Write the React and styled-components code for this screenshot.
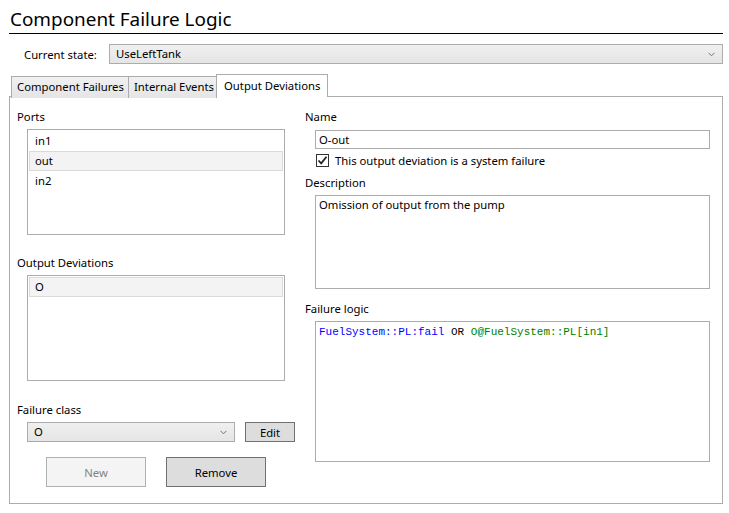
import React from "react";
import styled, { createGlobalStyle } from "styled-components";

const Global = createGlobalStyle`
  html, body { margin: 0; padding: 0; background: #fff; }
  body { font-family: "Segoe UI", "Noto Sans", "Liberation Sans", sans-serif; font-size: 11.3px; color: #000; }
  * { box-sizing: border-box; }
`;

const Page = styled.div`
  width: 729px;
  height: 513px;
  padding: 0 6px 0 9px;
  display: flex;
  flex-direction: column;
`;

const Title = styled.h1`
  margin: 0;
  height: 34px;
  padding: 7px 0 0 1px;
  font-size: 18.9px;
  font-weight: 400;
  line-height: 24px;
  border-bottom: 1px solid #000;
`;

const StateRow = styled.div`
  margin-top: 10px;
  display: flex;
  align-items: center;
  padding-left: 15px;
  height: 20px;
`;

const StateLabel = styled.span`
  width: 85px;
`;

const Combo = styled.div`
  flex: ${(p) => (p.$grow ? 1 : "none")};
  width: ${(p) => (p.$width ? `${p.$width}px` : "auto")};
  height: 20px;
  border: 1px solid #acacac;
  background: linear-gradient(#f0f0f0, #e5e5e5);
  display: flex;
  align-items: center;
  justify-content: space-between;
  padding: 0 7px 0 6px;
  line-height: 18px;
`;

const Chevron = () => (
  <svg width="7" height="5" viewBox="0 0 7 5">
    <path d="M0.5 0.8 L3.5 3.8 L6.5 0.8" fill="none" stroke="#707070" strokeWidth="1" />
  </svg>
);

const TabStrip = styled.div`
  margin-top: 10px;
  padding-left: 2px;
  display: flex;
  align-items: flex-start;
  height: 22px;
  position: relative;
  z-index: 1;
`;

const Tab = styled.div`
  width: ${(p) => p.$width}px;
  height: ${(p) => (p.$active ? 23 : 22)}px;
  margin-top: ${(p) => (p.$active ? 0 : 2)}px;
  border: 1px solid #acacac;
  border-bottom: none;
  margin-left: ${(p) => (p.$first ? 0 : -1)}px;
  background: ${(p) => (p.$active ? "#fff" : "linear-gradient(#f0f0f0, #e5e5e5)")};
  display: flex;
  align-items: flex-start;
  padding: ${(p) => (p.$active ? "2px 0 0 7px" : "1px 0 0 5px")};
  white-space: nowrap;
  line-height: 17px;
`;

const Panel = styled.div`
  height: 408px;
  border: 1px solid #acacac;
  padding: 10px 12px 0 7px;
  display: grid;
  grid-template-columns: 278px 1fr;
  column-gap: 10px;
`;

const Column = styled.div`
  display: flex;
  flex-direction: column;
`;

const Label = styled.div`
  height: 20px;
  line-height: 20px;
  margin-top: ${(p) => p.$top || 0}px;
`;

const ListBox = styled.div`
  margin: 2px 0 0 10px;
  width: 258px;
  height: 106px;
  border: 1px solid #acacac;
  padding: 1px;
  background: #fff;
`;

const ListItem = styled.div`
  height: 20px;
  line-height: 18px;
  padding-left: 5px;
  border: 1px solid ${(p) => (p.$selected ? "#dadada" : "transparent")};
  background: ${(p) => (p.$selected ? "#f3f3f3" : "transparent")};
`;

const ClassRow = styled.div`
  margin: 2px 0 0 10px;
  display: flex;
  gap: 10px;
`;

const Button = styled.button`
  width: ${(p) => p.$width}px;
  height: ${(p) => p.$height}px;
  font: inherit;
  color: ${(p) => (p.disabled ? "#838383" : "#000")};
  background: ${(p) => (p.disabled ? "#f4f4f4" : "#dddddd")};
  border: 1px solid ${(p) => (p.disabled ? "#adb2b5" : "#707070")};
  padding: 0;
  margin: 0;
`;

const ButtonRow = styled.div`
  margin: 15px 0 0 29px;
  display: flex;
  gap: 20px;
`;

const TextBox = styled.div`
  margin: ${(p) => p.$mt}px 0 0 10px;
  height: ${(p) => p.$height}px;
  border: 1px solid #acacac;
  padding: ${(p) => (p.$code ? "3px 3px" : "0 3px")};
  line-height: ${(p) => (p.$code ? "14px" : "17px")};
  background: #fff;
  font-family: ${(p) => (p.$code ? '"Liberation Mono", "DejaVu Sans Mono", monospace' : "inherit")};
  font-size: ${(p) => (p.$code ? "11px" : "inherit")};
  white-space: pre;
`;

const CheckRow = styled.label`
  margin: 2px 0 0 11px;
  height: 18px;
  display: flex;
  align-items: center;
  gap: 6px;
`;

const CheckBox = styled.span`
  width: 13px;
  height: 13px;
  border: 1px solid #333;
  background: #fff;
  display: flex;
  align-items: center;
  justify-content: center;
`;

const Tok = styled.span`
  color: ${(p) => p.$c};
`;

export default function App() {
  return (
    <>
      <Global />
      <Page>
        <Title>Component Failure Logic</Title>
        <StateRow>
          <StateLabel>Current state:</StateLabel>
          <Combo $grow>
            <span>UseLeftTank</span>
            <Chevron />
          </Combo>
        </StateRow>
        <TabStrip>
          <Tab $first $width={118}>Component Failures</Tab>
          <Tab $width={89}>Internal Events</Tab>
          <Tab $active $width={112}>Output Deviations</Tab>
        </TabStrip>
        <Panel>
          <Column>
            <Label>Ports</Label>
            <ListBox>
              <ListItem>in1</ListItem>
              <ListItem $selected>out</ListItem>
              <ListItem>in2</ListItem>
            </ListBox>
            <Label $top={18}>Output Deviations</Label>
            <ListBox>
              <ListItem $selected>O</ListItem>
            </ListBox>
            <Label $top={19}>Failure class</Label>
            <ClassRow>
              <Combo $width={208}>
                <span>O</span>
                <Chevron />
              </Combo>
              <Button $width={50} $height={20}>Edit</Button>
            </ClassRow>
            <ButtonRow>
              <Button disabled $width={100} $height={30}>New</Button>
              <Button $width={100} $height={30}>Remove</Button>
            </ButtonRow>
          </Column>
          <Column>
            <Label>Name</Label>
            <TextBox $mt={3} $height={19}>O-out</TextBox>
            <CheckRow>
              <CheckBox>
                <svg width="11" height="11" viewBox="0 0 11 11">
                  <path d="M1.5 5.5 L4.2 8.3 L9.5 1.8" fill="none" stroke="#212121" strokeWidth="1.8" />
                </svg>
              </CheckBox>
              <span>This output deviation is a system failure</span>
            </CheckRow>
            <Label $top={4}>Description</Label>
            <TextBox $mt={2} $height={94}>Omission of output from the pump</TextBox>
            <Label $top={10}>Failure logic</Label>
            <TextBox $mt={2} $height={141} $code>
              <Tok $c="#0000ff">FuelSystem::PL:fail</Tok>
              <Tok $c="#000000"> OR </Tok>
              <Tok $c="#008000">O@FuelSystem::PL[in1]</Tok>
            </TextBox>
          </Column>
        </Panel>
      </Page>
    </>
  );
}
